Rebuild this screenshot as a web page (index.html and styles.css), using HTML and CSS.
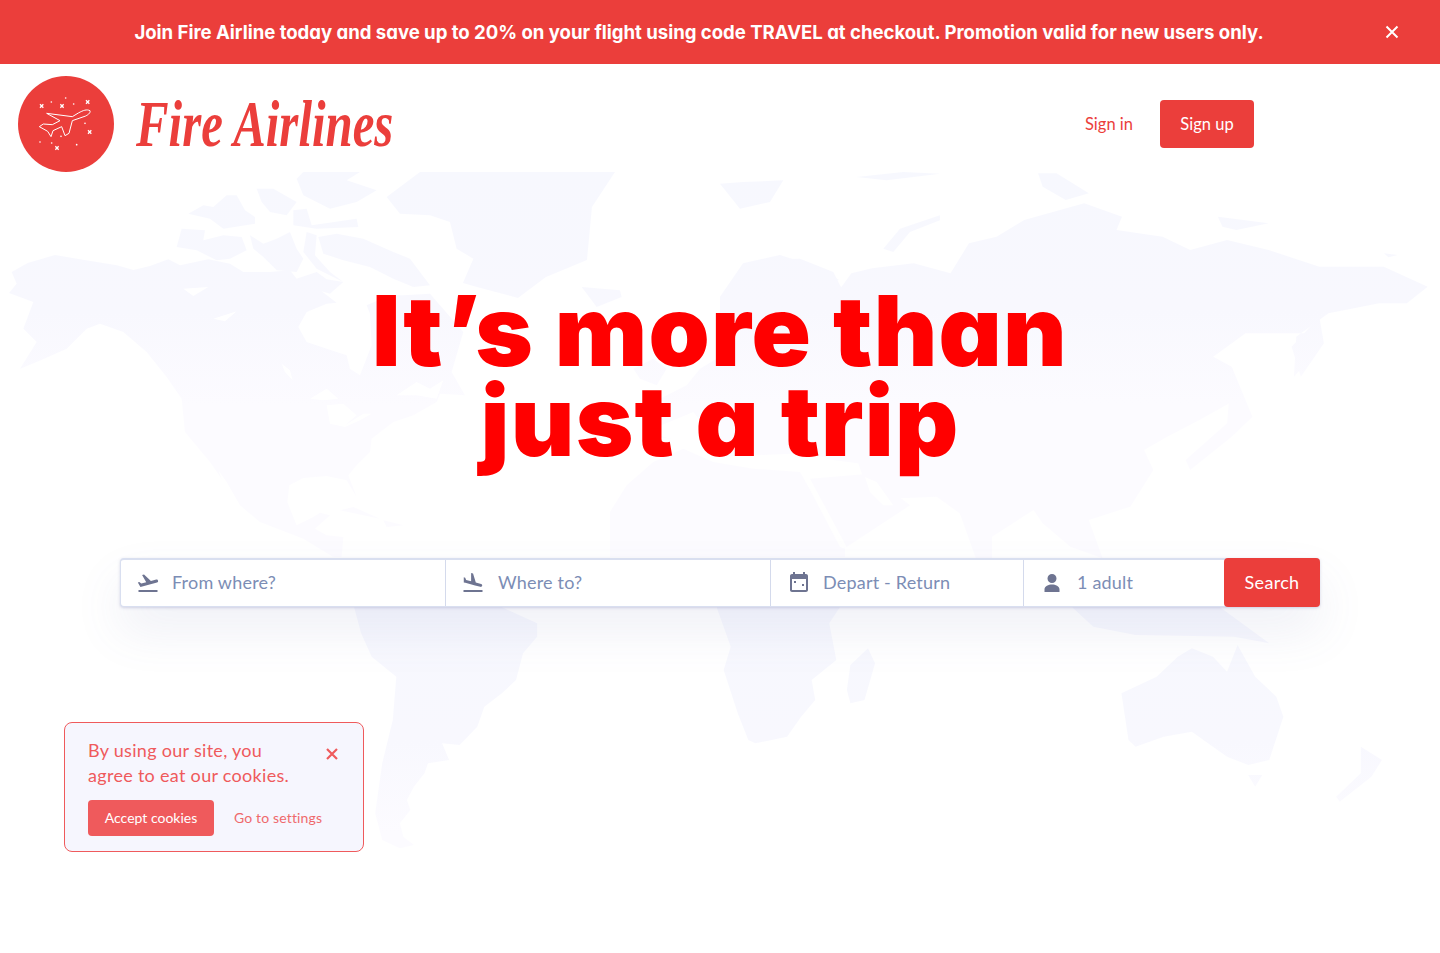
FILE: index.html
```html
<!DOCTYPE html>
<html lang="en">
<head>
<meta charset="utf-8">
<title>Fire Airlines</title>
<link rel="stylesheet" href="styles.css">
</head>
<body>
<div class="banner">
  <p class="banner-text">Join Fire Airline today and save up to 20% on your flight using code TRAVEL at checkout. Promotion valid for new users only.</p>
  <button class="banner-close" aria-label="Close"><svg viewBox="0 0 16 16" class="x"><path d="M2.5 2.5l11 11M13.500 2.500l-11 11"/></svg></button>
</div>
<header class="header">
  <a class="brand" href="#">
    <svg class="logo" viewBox="9 6 288 288">
      <circle cx="153" cy="150" r="144" fill="#eb3e3b"/>
      <g fill="none" stroke="#fff" stroke-width="3" stroke-linejoin="round">
        <path d="M225 110C215 105 205 109 190 117L172 128 95 118 135 140 112 152 85 150 73 158 98 172 108 188 114 170 140 158 150 185 162 178 172 140 212 126C222 121 227 115 225 110Z"/>
      </g>
      <g stroke="#fff" stroke-width="4" fill="none">
        <path d="M75 91l10 10M85 91l-10 10M136 91l10 10M146 91l-10 10M213 79l10 10M223 79l-10 10M219 169l10 10M229 169l-10 10M121 217l10 10M131 217l-10 10"/>
      </g>
      <g fill="#fff">
        <circle cx="109" cy="84" r="2.500"/><circle cx="152" cy="72" r="2.500"/><circle cx="176" cy="90" r="2.500"/><circle cx="210" cy="148" r="2.500"/><circle cx="75" cy="204" r="2.500"/><circle cx="110" cy="207" r="2.500"/><circle cx="185" cy="212" r="2.500"/><circle cx="138" cy="187" r="2.500"/>
      </g>
    </svg>
    <span class="brand-name">Fire Airlines</span>
  </a>
  <nav class="nav">
    <a class="nav-link" href="#">Sign in</a>
    <a class="btn nav-btn" href="#">Sign up</a>
  </nav>
</header>
<main class="hero">
  <svg class="map" viewBox="0 0 1440 700" aria-hidden="true">
    <defs>
      <linearGradient id="mapfill" gradientUnits="userSpaceOnUse" x1="0" y1="0" x2="0" y2="700">
        <stop offset="0" stop-color="#f7f8fe"/>
        <stop offset=".6" stop-color="#f8f8fe"/>
        <stop offset="1" stop-color="#fcfbff"/>
      </linearGradient>
    </defs>
    <g fill="url(#mapfill)">
      <g transform="translate(130 0) scale(.3333)">
        <path d="M-363 363L-340 335-355 300-307 273-225 249-150 262-40 280 10 294 60 282 115 262 150 280 235 262 300 275 340 300 420 300 480 295 500 320 560 300 590 322 640 330 600 365 575 358 620 392 590 395 530 420 505 465 530 510 590 530 650 550 660 590 690 610 725 520 720 425 710 400 780 370 820 370 900 365 1000 480 965 600 1005 670 930 665 920 690 850 730 790 750 725 800 720 840 680 880 655 910 680 975 650 925 590 912 520 918 478 940 472 990 500 1060 550 1035 570 1022 600 1030 555 1070 590 1090 640 1095 635 1155 610 1155 520 1100 390 1050 330 1000 240 870 165 780 155 680 110 615 50 540-20 480-90 455-130 470-190 530-280 570-330 590-280 510-320 470-290 390Z"/>
        <path d="M175 125L220 100 250 105 290 70 320 70 345 115 375 135 375 155 280 170 240 140ZM155 170L225 175 220 205 280 190 335 195 350 235 300 260 260 265 200 235 140 225ZM360 190L400 215 440 200 480 180 500 230 520 260 500 300 440 295 400 255 370 230ZM565 195L620 185 700 200 790 240 840 260 900 340 850 345 790 320 720 285 640 265 580 245ZM380 50L430 50 500 90 470 130 420 120 395 90ZM490 115L530 110 545 160 680 140 685 165 560 170 490 160ZM500 20L520 0 690 0 650 25 740 55 680 90 600 110 520 70ZM530 180L560 190 555 250 600 300 640 330 560 290 520 240Z"/>
        <path d="M770 75L870 0 1455 0 1386 105 1371 264 1248 315 1164 378 1041 345 999 333 1030 260 980 230 960 150 900 130 810 125Z"/>
        <g fill="#fff">
          <path d="M540 680L590 650 625 680 580 685ZM590 700L640 695 680 730 645 760 700 725 725 725 690 745 645 765 600 755ZM455 575L480 595 488 625 465 600ZM250 440L320 418 285 448ZM160 350L235 345 190 372ZM265 895L290 930 330 1000 290 960ZM800 670L860 630 900 650 940 625 920 680 860 670ZM985 270L1030 260 1015 290Z"/>
        </g>
        <path d="M630 1015L670 1005 750 1040 700 1030ZM760 1045L820 1060 770 1065Z"/>
      </g>
      <g transform="translate(540 0) scale(.3333)">
        <path d="M125 345L240 355 245 375 170 405ZM540 35L610 30 730 25 690 90 600 110ZM950 15L1090 0 1200 5 1040 25ZM1030 230L1080 170 1200 130 1200 145 1110 180 1060 240Z"/>
        <path d="M600 290L680 262 780 260 880 300 900 340 1000 500 1000 880 315 790 315 730 360 680 440 640 480 590 555 545 590 470 530 440ZM280 590L340 560 380 590 350 640 300 620Z"/>
        <path d="M210 1155L210 1020 260 940 340 870 430 830 520 870 640 890 780 900 915 1130 915 1155ZM810 920L990 905 1110 1000 920 1125Z"/>
        <g fill="#fff">
          <path d="M640 400L680 360 700 365 660 420 600 500 590 450ZM315 780L460 720 500 770 640 740 780 800 800 770 900 820 840 880 650 870 520 850 430 810ZM860 640L980 620 1000 680 880 700Z"/>
        </g>
      </g>
      <g transform="translate(720 -2) scale(.461 .3333)">
        <path d="M0 380L50 280 130 255 210 290 258 330 220 350 180 340 240 395 285 310 330 295 420 280 500 310 540 220 600 200 660 150 790 100 872 140 860 180 960 200 1020 240 1100 210 1190 240 1300 290 1440 290 1535 350 1490 400 1430 400 1320 430 1250 500 1245 620 1290 550 1300 490 1140 490 1070 560 1110 590 1130 680 1040 750 970 800 920 840 940 900 890 1010 800 1050 830 1165 760 1130 700 1060 680 1020 590 1100 590 1165 555 1165 520 1030 470 980 390 985 310 920 300 880 180 850 0 860Z"/>
        <path d="M690 10L730 10 800 70 750 90 700 50ZM1080 140L1190 160 1120 180 1090 170ZM1240 530L1300 440 1310 520 1260 620ZM1110 590L1155 740 1110 800 1020 900 1010 870 1100 760ZM1440 250L1470 255 1450 262Z"/>
      </g>
      <g fill="#fff" transform="translate(540 0) scale(.3333)">
        <path d="M975 915L1010 930 1060 1000 1030 1000 990 960Z"/>
        <path d="M790 915L805 925 915 1130 900 1125Z"/>
      </g>
      <g transform="translate(340 428) scale(.704 .3333)">
        <path d="M20 22L230 22 280 70 280 110 260 160 250 240 230 280 205 320 195 380 170 435 145 430 155 480 125 490 120 520 105 560 95 600 100 630 85 670 90 710 105 735 85 745 60 720 50 640 60 490 75 360 80 230 45 170 30 100Z"/>
        <path d="M535 22L710 22 695 70 705 180 670 240 675 300 655 350 635 410 590 430 580 420 565 340 545 210 555 140ZM750 145L760 190 745 300 725 310 720 270 725 195Z"/>
        <path d="M1210 145L1240 170 1260 215 1275 135 1300 230 1330 290 1340 350 1320 480 1290 495 1260 470 1240 440 1210 395 1170 410 1130 440 1120 420 1110 280 1160 230 1190 170ZM1290 525L1310 525 1300 560ZM1450 440L1480 480 1465 530 1420 605 1415 590 1450 520ZM1040 22L1250 22 1320 130 1270 110 1130 105 1070 80Z"/>
      </g>
    </g>
  </svg>
  <h1 class="headline">It’s more than<br>just a trip</h1>
  <form class="search">
    <div class="field field-wide">
      <svg class="icon" viewBox="0 0 24 24"><path d="M2.500 19h19v2h-19v-2zm19.570-9.360c-.21-.8-1.040-1.280-1.840-1.060L14.920 10l-6.900-6.430-1.930.51 4.140 7.170-4.970 1.330-1.970-1.540-1.450.39 2.590 4.490L21 11.490c.81-.23 1.280-1.050 1.070-1.850z"/></svg>
      <span class="placeholder">From where?</span>
    </div>
    <div class="field field-wide">
      <svg class="icon" viewBox="0 0 24 24"><path d="M2.500 19h19v2h-19v-2zm7.180-5.730l4.350 1.160 5.310 1.420c.8.210 1.620-.26 1.840-1.060.21-.8-.26-1.620-1.060-1.840l-5.310-1.420-2.760-9.020L10.120 2v8.280L5.150 8.950l-.93-2.320-1.450-.39v5.170l1.600.43 5.310 1.430z"/></svg>
      <span class="placeholder">Where to?</span>
    </div>
    <div class="field field-date">
      <svg class="icon" viewBox="0 0 24 24"><path d="M19 3h-1V1h-2v2H8V1H6v2H5C3.900 3 3 3.900 3 5v14c0 1.100.9 2 2 2h14c1.100 0 2-.9 2-2V5c0-1.100-.9-2-2-2zm0 16H5V8h14v11zM7 10h2v2H7zM15 13h2v2h-2z"/></svg>
      <span class="placeholder">Depart - Return</span>
    </div>
    <div class="field field-people">
      <svg class="icon" viewBox="0 0 24 24"><path d="M12 12a4.500 4.500 0 1 0 0-9 4.500 4.500 0 0 0 0 9zm0 1.500c-3.500 0-7.500 1.700-7.500 5V21h15v-2.500c0-3.300-4-5-7.500-5z"/></svg>
      <span class="placeholder">1 adult</span>
    </div>
    <button class="btn search-btn" type="button">Search</button>
  </form>
</main>
<aside class="cookie">
  <div class="cookie-top">
    <p class="cookie-text">By using our site, you agree to eat our cookies.</p>
    <button class="cookie-close" aria-label="Dismiss"><svg viewBox="0 0 16 16" class="x"><path d="M3 3l10 10M13 3L3 13"/></svg></button>
  </div>
  <div class="cookie-actions">
    <button class="cookie-accept">Accept cookies</button>
    <a class="cookie-settings" href="#">Go to settings</a>
  </div>
</aside>
</body>
</html>
```
FILE: styles.css
```css
* { box-sizing: border-box; }
html, body { margin: 0; padding: 0; }
body {
  height: 953px;
  overflow: hidden;
  position: relative;
  background: #fff;
  font-family: "Lato", "Noto Sans", sans-serif;
}
button { font: inherit; border: 0; background: none; padding: 0; cursor: pointer; }
a { text-decoration: none; }
.x { display: block; fill: none; stroke: currentColor; }

.banner {
  height: 64px;
  background: #eb3e3b;
  color: #fff;
  position: relative;
  display: flex;
  align-items: center;
  justify-content: center;
}
.banner-text {
  margin: 0 42px 0 0;
  font: 700 18.600px "Inter", sans-serif;
  letter-spacing: -.03px;
  font-feature-settings: "cv11";
}
.banner-close { position: absolute; right: 40px; top: 24px; width: 16px; height: 16px; color: #fff; }
.banner-close .x { stroke-width: 2; }

.header {
  height: 108px;
  padding: 12px 186px 0 18px;
  display: flex;
  justify-content: space-between;
  align-items: flex-start;
}
.brand { display: flex; align-items: center; gap: 22px; height: 96px; }
.logo { width: 96px; height: 96px; display: block; }
.brand-name {
  font: italic 700 66px "Liberation Serif", serif;
  color: #eb3e3b;
  line-height: 96px;
  transform: scaleX(.74);
  transform-origin: left center;
}
.nav { display: flex; align-items: center; gap: 27px; height: 96px; }
.nav-link { color: #eb3e3b; font-size: 16.500px; }
.btn { background: #eb3e3b; color: #fff; border-radius: 4px; font-size: 16.500px; display: flex; align-items: center; justify-content: center; }
.nav-btn { width: 94px; height: 48px; }

.hero { position: relative; height: 781px; display: flex; flex-direction: column; align-items: center; }
.map { position: absolute; left: 0; top: 0; width: 1440px; height: 700px; }
.headline {
  position: relative;
  margin: 114px 0 0;
  font: 900 98px/90px "Inter", sans-serif;
  letter-spacing: 1.2px;
  color: #f00;
  text-align: center;
  font-feature-settings: "cv11";
}
.search {
  position: relative;
  margin-top: 92px;
  width: 1200px;
  height: 49px;
  display: flex;
  background: #fff;
  border: 1px solid #d9dff0;
  border-top-width: 2px;
  border-radius: 4px;
  box-shadow: 0 1px 3px rgba(88,92,160,.25), 0 24px 48px rgba(100,105,170,.1);
}
.field { display: flex; align-items: center; border-right: 1px solid #d4daec; padding-left: 15px; gap: 12px; }
.field-wide { width: 325px; }
.field-wide + .field-wide { gap: 13px; }
.field-date { width: 253px; padding-left: 16px; gap: 12px; }
.field-people { flex: 1; border-right: 0; padding-left: 16px; gap: 13px; }
.icon { width: 24px; height: 24px; fill: #6e7491; flex: none; }
.placeholder { color: #7c8db5; font-size: 18px; letter-spacing: .2px; margin-top: -3px; }
.search-btn { width: 96px; margin: -2px -1px -1px 0; font-size: 18px; letter-spacing: .3px; position: relative; padding-bottom: 2px; }

.cookie {
  position: absolute;
  left: 64px;
  top: 722px;
  width: 300px;
  height: 130px;
  padding: 15px 23px;
  background: #f6f6fe;
  border: 1px solid #ef5a5c;
  border-radius: 8px;
  color: #ef5a5c;
}
.cookie-top { display: flex; justify-content: space-between; }
.cookie-text { margin: 0; width: 215px; font-size: 18px; line-height: 25px; letter-spacing: .3px; }
.cookie-close { width: 16px; height: 16px; margin: 8px 0 0; color: #ef5a5c; }
.cookie-close .x { stroke-width: 2.200; }
.cookie-actions { display: flex; align-items: center; gap: 20px; margin-top: 12px; }
.cookie-accept { width: 126px; height: 36px; border-radius: 4px; background: #ef5a5c; color: #fff; font-size: 14px; padding-bottom: 2px; }
.cookie-settings { color: #ef5a5c; font-size: 14px; letter-spacing: .15px; opacity: .9; margin-top: -2px; }
```
